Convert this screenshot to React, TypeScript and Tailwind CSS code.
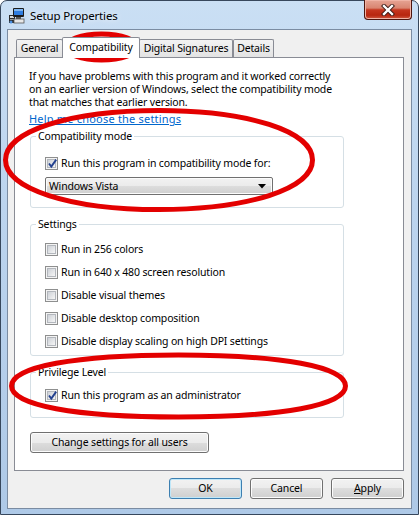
import React from 'react'

const font = "font-['Noto_Sans','Open_Sans',sans-serif]"

const btnBg =
  'bg-[linear-gradient(#f2f2f2_0%,#ebebeb_50%,#dddddd_50%,#cfcfcf_100%)] shadow-[inset_0_0_0_1px_#fcfcfc]'

// slightly boxy hand-drawn ellipse
function oval(cx: number, cy: number, rx: number, ry: number, k: number) {
  const l = cx - rx, r = cx + rx, t = cy - ry, b = cy + ry
  return `M${l},${cy} C${l},${cy - k * ry} ${cx - k * rx},${t} ${cx},${t} C${cx + k * rx},${t} ${r},${cy - k * ry} ${r},${cy} C${r},${cy + k * ry} ${cx + k * rx},${b} ${cx},${b} C${cx - k * rx},${b} ${l},${cy + k * ry} ${l},${cy} Z`
}

function CheckBox({ checked }: { checked?: boolean }) {
  return (
    <span className="relative flex h-[13px] w-[13px] shrink-0 items-center justify-center border border-[#8e8f8f] bg-[#f4f4f4]">
      <span className="h-[9px] w-[9px] border border-[#b3b7bd] bg-[linear-gradient(135deg,#cdd1d7,#f6f6f6)]" />
      {checked && (
        <svg className="absolute left-[1px] top-[0px]" width="11" height="11" viewBox="0 0 11 11">
          <path d="M2 5.5 L4.3 8.6 L9.2 1.6" fill="none" stroke="#23418f" strokeWidth="1.9" />
        </svg>
      )}
    </span>
  )
}

function Row({ label, checked }: { label: string; checked?: boolean }) {
  return (
    <div className="flex h-[16px] items-center gap-[3px]">
      <CheckBox checked={checked} />
      <span className="whitespace-nowrap leading-[16px]">{label}</span>
    </div>
  )
}

function Group({ title, className, children }: { title: string; className: string; children: React.ReactNode }) {
  return (
    <div className={`relative ml-px w-[314px] rounded-[3px] border border-[#d5dfe5] ${className}`}>
      <span className="absolute -top-[8px] left-[5px] bg-white px-[2px] leading-[15px]">{title}</span>
      {children}
    </div>
  )
}

function Tab({ label, active, w }: { label: string; active?: boolean; w: string }) {
  if (active) {
    return (
      <div
        className={`relative z-10 -mx-[1px] -mb-px flex h-[21px] items-start justify-center whitespace-nowrap rounded-t-[2px] border border-b-0 border-[#898c95] bg-white pt-[2px] ${w}`}
      >
        {label}
      </div>
    )
  }
  return (
    <div
      className={`flex h-[18px] items-center justify-center whitespace-nowrap rounded-t-[2px] border border-b-0 border-[#898c95] bg-[linear-gradient(#f3f3f3,#e3e3e3)] pt-[1px] ${w}`}
    >
      {label}
    </div>
  )
}

function Button({ children, primary, w }: { children: React.ReactNode; primary?: boolean; w: string }) {
  return (
    <div
      className={`flex h-[21px] items-center justify-center whitespace-nowrap rounded-[3px] border ${
        primary
          ? 'border-[#3c7fb1] bg-[linear-gradient(#f2f2f2_0%,#ebebeb_50%,#dddddd_50%,#cfcfcf_100%)] shadow-[inset_0_0_0_1px_#bfe7f9]'
          : `border-[#707070] ${btnBg}`
      } ${w}`}
    >
      {children}
    </div>
  )
}

function AppIcon() {
  return (
    <svg width="17" height="17" viewBox="0 0 17 17">
      <rect x="1" y="8" width="6" height="8" fill="#2b2b2b" />
      <rect x="2" y="9" width="4" height="2" fill="#d8d8d8" />
      <rect x="2" y="12" width="4" height="1" fill="#9a9a9a" />
      <rect x="5" y="1" width="11" height="9" rx="1" fill="#1c1c1c" />
      <rect x="6" y="2" width="9" height="6" fill="#2f7de0" />
      <rect x="6" y="2" width="9" height="2" fill="#7fb6f2" />
      <rect x="8" y="10" width="5" height="2" fill="#555" />
      <rect x="6" y="12" width="10" height="4" fill="#e8e8e8" stroke="#555" strokeWidth="0.8" />
      <circle cx="3" cy="15" r="1.5" fill="#4a90e2" />
    </svg>
  )
}

export default function App() {
  return (
    <div className={`${font} relative h-[515px] w-[419px] overflow-hidden text-[10.5px] tracking-[-0.15px] text-black`}>
      <div className="flex h-[515px] w-[419px] flex-col rounded-t-[7px] border border-[#37475c] bg-[linear-gradient(180deg,#cadff4_0%,#bcd4ee_40%,#aec9e7_100%)] px-[6px] pb-[5px]">
        {/* title bar */}
        <div className="flex h-[28px] items-start justify-between">
          <div className="flex items-center gap-[5px] pl-[1px] pt-[6px]">
            <AppIcon />
            <span className="text-[11.5px] leading-[16px] [text-shadow:0_0_6px_#ffffff]">Setup Properties</span>
          </div>
          <div className="-mt-px flex h-[20px] w-[48px] items-center justify-center rounded-b-[4px] border border-t-0 border-[#4d150e] bg-[linear-gradient(#e6a494_0%,#d98571_42%,#c5361f_52%,#b8260f_80%,#cf5a42_100%)] shadow-[inset_0_0_0_1px_#f0b4a6]">
            <svg width="14" height="12" viewBox="0 0 14 12">
              <path d="M3 2 L11 10 M11 2 L3 10" stroke="#3a1a15" strokeWidth="4.2" strokeLinecap="square" />
              <path d="M3 2 L11 10 M11 2 L3 10" stroke="#ffffff" strokeWidth="2.4" strokeLinecap="square" />
            </svg>
          </div>
        </div>

        {/* client area */}
        <div className="flex flex-1 flex-col border border-[#7b8ca2] bg-[#f0f0f0]">
          <div className="ml-[8px] mt-[7px] flex h-[20px] items-end">
            <Tab label="General" w="w-[47px]" />
            <Tab label="Compatibility" active w="w-[78px]" />
            <Tab label="Digital Signatures" w="w-[94px]" />
            <Tab label="Details" w="w-[41px]" />
          </div>

          <div className="ml-[6px] flex h-[414px] w-[390px] flex-col border border-[#898c95] bg-white pl-[14px] pt-[12px]">
            <p className="whitespace-nowrap leading-[13px]">
              If you have problems with this program and it worked correctly
              <br />
              on an earlier version of Windows, select the compatibility mode
              <br />
              that matches that earlier version.
            </p>
            <span className="mt-[3px] text-[11px] leading-[13px] tracking-[0.2px] text-[#0066cc] underline">
              Help me choose the settings
            </span>

            <Group title="Compatibility mode" className="mt-[11px] h-[72px] pl-[14px] pt-[18px]">
              <Row label="Run this program in compatibility mode for:" checked />
              <div
                className={`mt-[6px] flex h-[18px] w-[228px] items-center justify-between rounded-[2px] border border-[#707070] pl-[3px] pr-[6px] ${btnBg}`}
              >
                <span className="leading-[16px]">Windows Vista</span>
                <svg width="8" height="5" viewBox="0 0 8 5">
                  <path d="M0 0 L8 0 L4 4.5 Z" fill="#000" />
                </svg>
              </div>
            </Group>

            <Group title="Settings" className="mt-[16px] h-[132px] pl-[14px] pt-[16px]">
              <div className="flex flex-col gap-[7px]">
                <Row label="Run in 256 colors" />
                <Row label="Run in 640 x 480 screen resolution" />
                <Row label="Disable visual themes" />
                <Row label="Disable desktop composition" />
                <Row label="Disable display scaling on high DPI settings" />
              </div>
            </Group>

            <Group title="Privilege Level" className="mt-[16px] h-[46px] pl-[14px] pt-[14px]">
              <Row label="Run this program as an administrator" checked />
            </Group>

            <div className="ml-px mt-[14px]">
              <Button w="w-[179px]">Change settings for all users</Button>
            </div>
          </div>

          <div className="ml-[6px] mt-[7px] flex w-[390px] justify-end gap-[8px]">
            <Button primary w="w-[73px]">OK</Button>
            <Button w="w-[73px]">Cancel</Button>
            <Button w="w-[73px]">
              <span>
                <span className="underline">A</span>pply
              </span>
            </Button>
          </div>
        </div>
      </div>

      {/* red annotation ellipses drawn over the dialog */}
      <svg className="pointer-events-none absolute left-0 top-0" width="419" height="515" viewBox="0 0 419 515">
        <g fill="none" stroke="#e30000" strokeWidth="5">
          <path d={oval(101.5, 47, 36, 13, 0.56)} />
          <path d={oval(159, 160, 153.5, 49.5, 0.58)} />
          <path d={oval(178.5, 386, 167, 31, 0.62)} />
        </g>
      </svg>
    </div>
  )
}
